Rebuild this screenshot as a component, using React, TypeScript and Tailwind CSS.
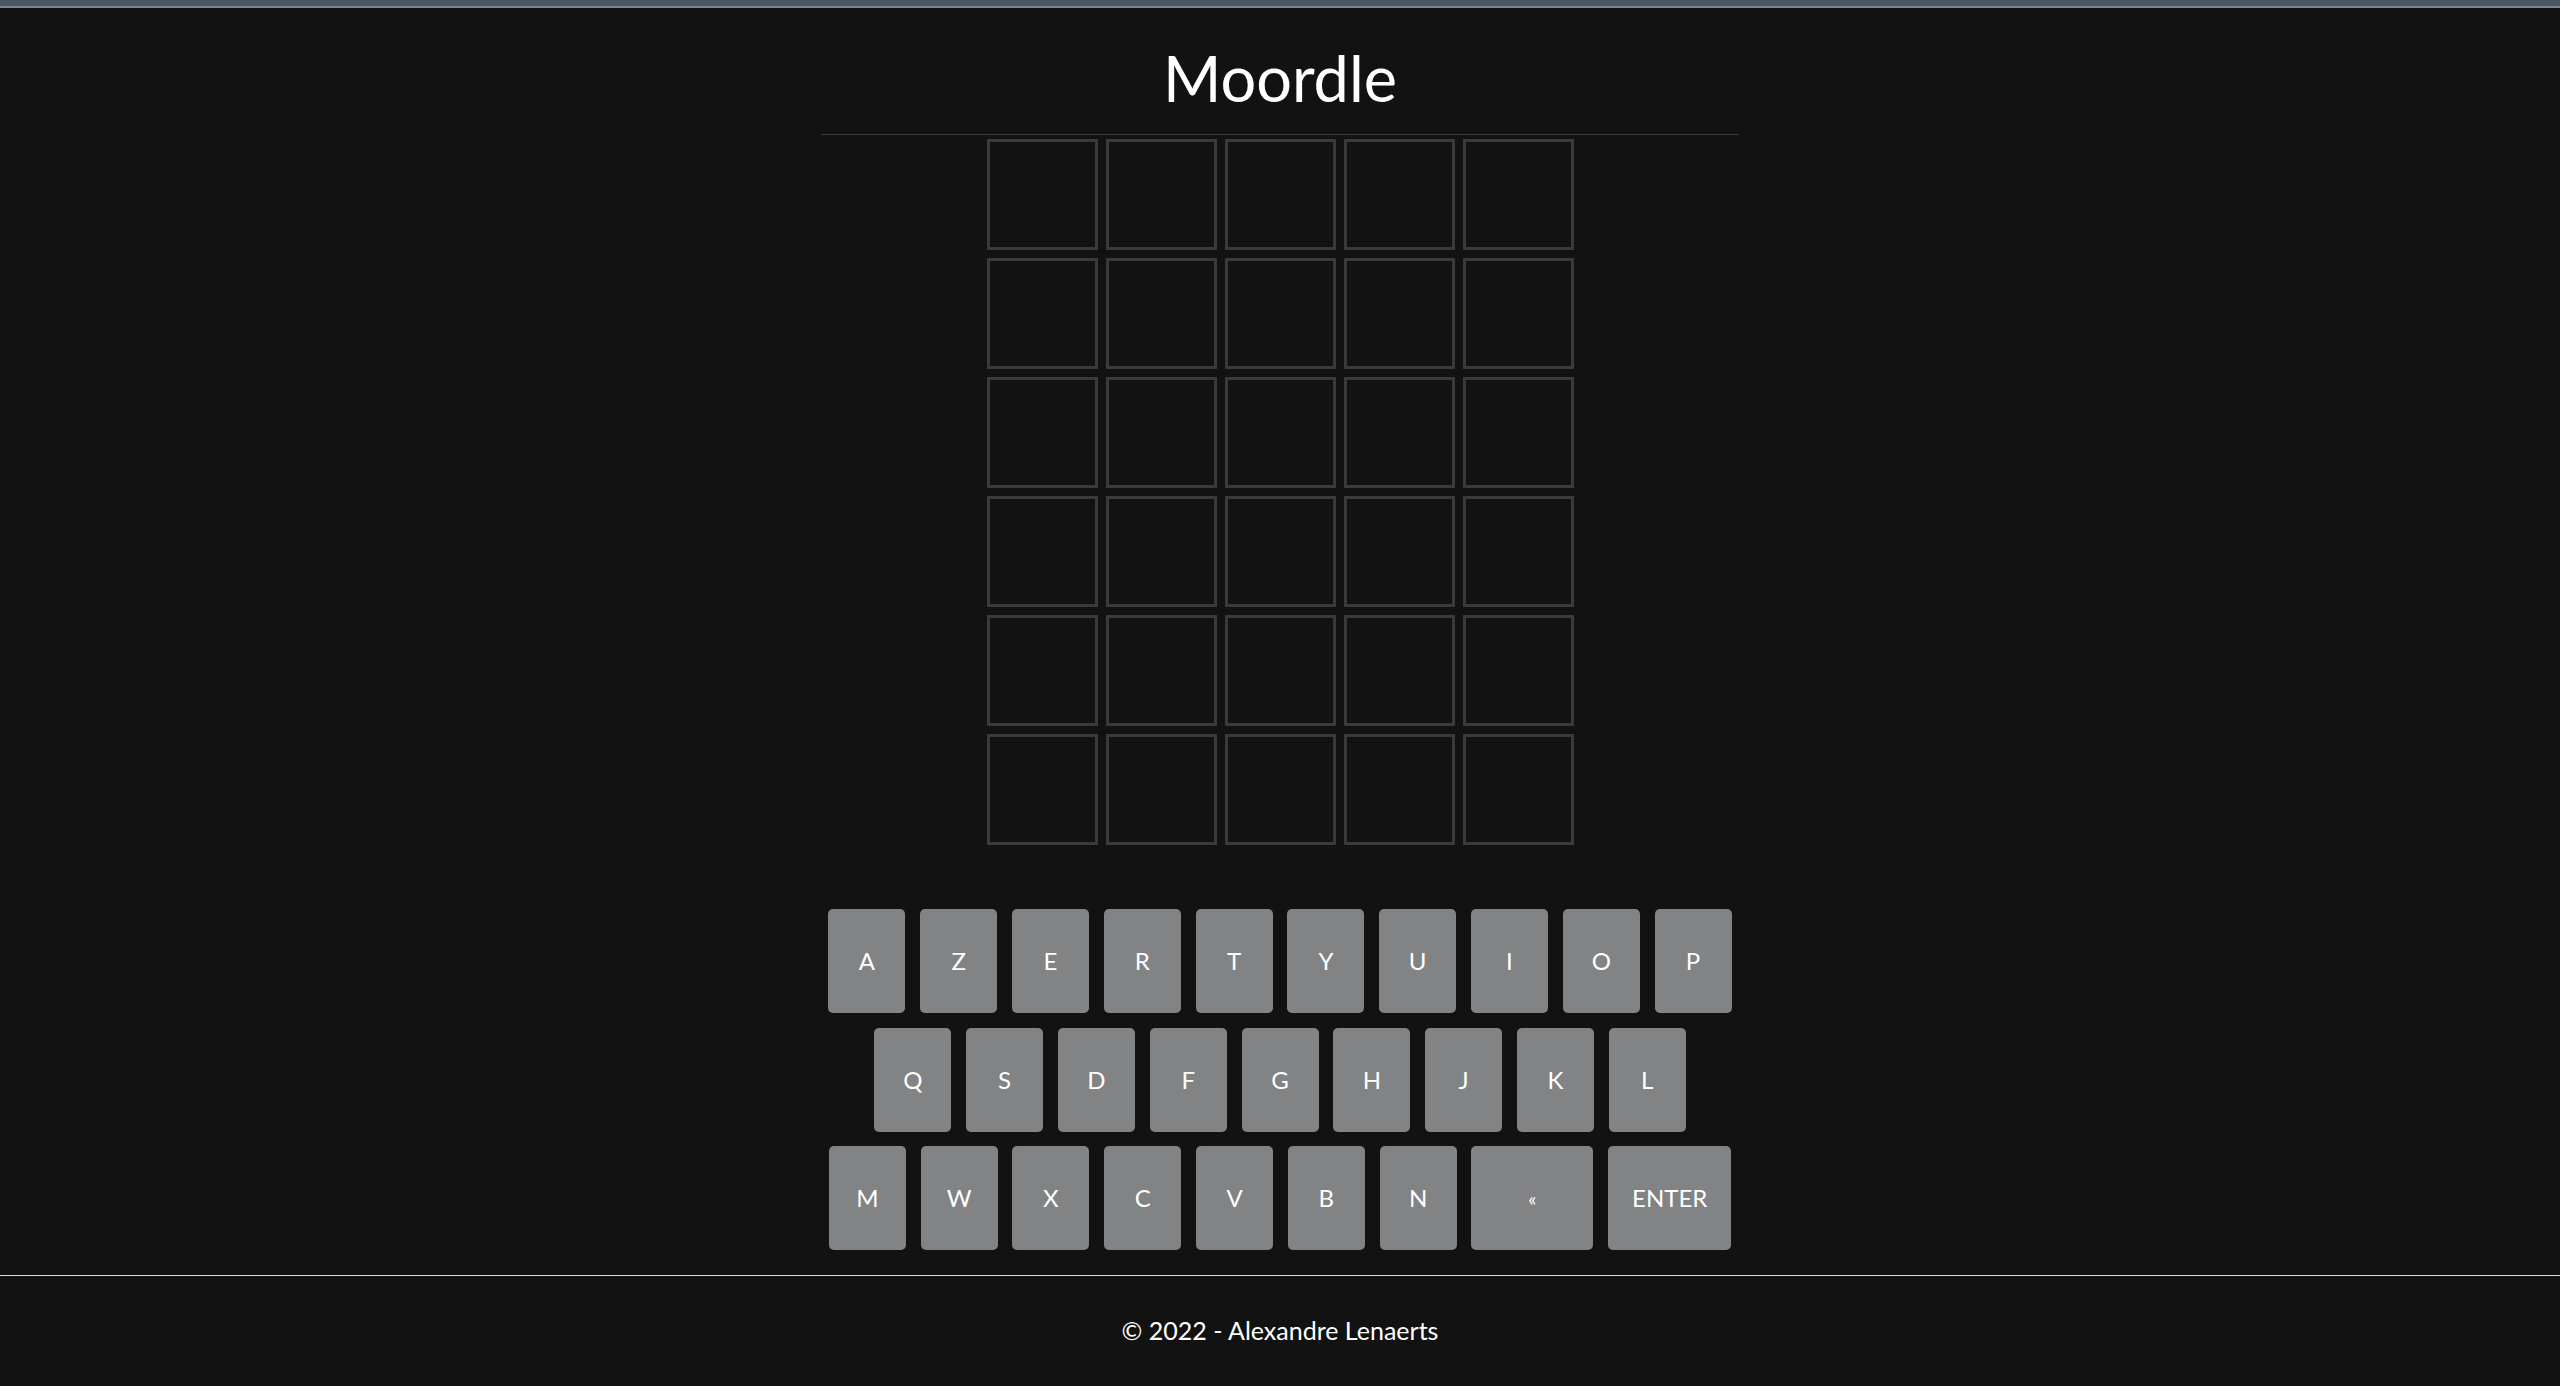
import React from 'react';

const rows: string[][] = [
  ['A', 'Z', 'E', 'R', 'T', 'Y', 'U', 'I', 'O', 'P'],
  ['Q', 'S', 'D', 'F', 'G', 'H', 'J', 'K', 'L'],
  ['M', 'W', 'X', 'C', 'V', 'B', 'N', '«', 'ENTER'],
];

const font = { fontFamily: 'Lato, "Open Sans", "DejaVu Sans", sans-serif' };

const Key: React.FC<{ label: string }> = ({ label }) => {
  // touches spéciales plus larges
  const wide = label === '«' ? 'w-[122px] text-[19px]' : label === 'ENTER' ? 'w-[123px] text-[24px]' : 'w-[77px] text-[24px]';
  return (
    <button className={`${wide} h-[104px] rounded-[5px] bg-[#818384] text-white flex items-center justify-center leading-none`}>
      {label}
    </button>
  );
};

const App: React.FC = () => {
  return (
    <div className="min-h-screen bg-[#121212] text-white flex flex-col" style={font}>
      {/* barre du haut */}
      <div className="h-[6px] bg-[#465862]" />
      <div className="h-[2px] bg-[#7b8690]" />

      {/* titre */}
      <header className="w-[918px] mx-auto pt-[38px] pb-[25px] border-b border-[#3a3a3c] text-center">
        <h1 className="text-[63px] leading-none font-normal">Moordle</h1>
      </header>

      {/* grille */}
      <div className="mx-auto mt-[4px] grid grid-cols-5 gap-[8px]">
        {Array.from({ length: 30 }).map((_, i) => (
          <div key={i} className="w-[111px] h-[111px] border-[3px] border-[#3a3a3c]" />
        ))}
      </div>

      {/* clavier */}
      <div className="mt-[64px] flex flex-col items-center gap-[14.5px]">
        {rows.map((row, r) => (
          <div key={r} className="flex gap-[14.8px]">
            {row.map((k) => (
              <Key key={k} label={k} />
            ))}
          </div>
        ))}
      </div>

      {/* pied de page */}
      <footer className="mt-[25px] border-t border-[#dcdcdc] h-[110px] flex items-center justify-center">
        <p className="text-[25px] leading-none">© 2022 - Alexandre Lenaerts</p>
      </footer>
    </div>
  );
};

export default App;
